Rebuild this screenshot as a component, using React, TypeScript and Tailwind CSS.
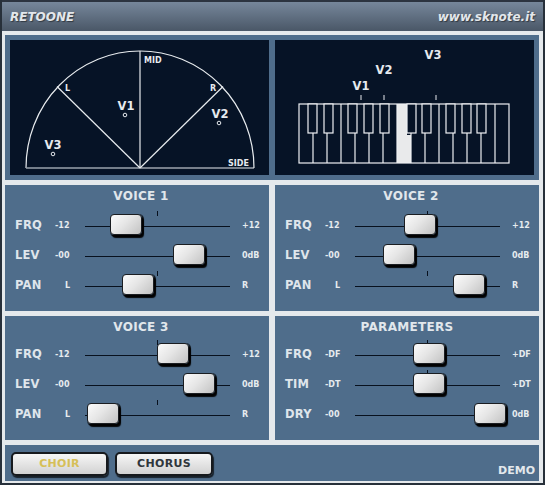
import React from 'react';

const FONT = { fontFamily: '"DejaVu Sans", Verdana, sans-serif' };

type RowProps = { label: string; min: string; max: string; pos: number; tick?: boolean };

function Row({ label, min, max, pos, tick }: RowProps) {
  return (
    <div className="flex items-center h-[30px]">
      <div className="w-[40px] flex-none text-[11.5px] font-bold text-[#dfe5eb] tracking-[0.2px]">{label}</div>
      <div className={min === 'L' ? 'w-[30px] flex-none pl-[10px] text-[8px] font-bold text-[#e6ebef]' : 'w-[30px] flex-none text-[8px] font-bold text-[#e6ebef]'}>{min}</div>
      <div className="relative flex-none w-[145px] h-[30px]">
        <div className="absolute left-0 right-0 top-[15px] h-px bg-[#08111e]" />
        {tick && <div className="absolute left-[72px] top-[0px] w-px h-[5px] bg-[#08111e]" />}
        <div
          className="absolute top-[3px] w-[32px] h-[21px] rounded-[4px] border border-[#1a1d21] bg-[linear-gradient(135deg,#fbfbfb_0%,#e6e6e6_45%,#c2c2c2_100%)] shadow-[2px_3px_1px_0px_rgba(0,0,0,0.95),1px_1px_0px_1px_rgba(0,0,0,0.7)]"
          style={{ left: pos }}
        />
      </div>
      <div className="ml-[12px] text-[8px] font-bold text-[#e6ebef]">{max}</div>
    </div>
  );
}

type PanelProps = {
  title: string;
  titleShift?: boolean;
  lower?: boolean;
  rows: RowProps[];
};

function Panel({ title, titleShift, lower, rows }: PanelProps) {
  return (
    <div className={lower ? 'w-[264px] h-[124px] bg-[#4f6d8b] pl-[10px] flex flex-col' : 'w-[264px] h-[126px] bg-[#4f6d8b] pl-[10px] flex flex-col'}>
      <div className={lower ? 'h-[24px] flex-none' : 'h-[26px] flex-none'}>
        <div className={titleShift ? 'h-[22px] flex items-center justify-center pl-[0px] pr-[2px] text-[12px] font-bold text-[#e1e7ec] tracking-[0.3px]' : 'h-[22px] flex items-center justify-center pr-[10px] text-[12px] font-bold text-[#e1e7ec] tracking-[0.3px]'}>
          {title}
        </div>
      </div>
      {rows.map((r) => (
        <Row key={r.label} {...r} />
      ))}
    </div>
  );
}

function StereoScreen() {
  const ff = '"DejaVu Sans", Verdana, sans-serif';
  return (
    <div className="w-[259px] h-[135px] bg-[#061326]">
      <svg width="259" height="135" viewBox="0 0 259 135">
        <path d="M16 128 A114 117 0 0 1 244 128" fill="none" stroke="#e8ecef" strokeWidth="1.2" />
        <line x1="16" y1="128" x2="130" y2="128" stroke="#9aa3ad" strokeWidth="1.6" />
        <line x1="130" y1="128" x2="244" y2="128" stroke="#e8ecef" strokeWidth="1.2" />
        <line x1="130" y1="11" x2="130" y2="128" stroke="#e8ecef" strokeWidth="1.2" />
        <line x1="130" y1="128" x2="47" y2="46.5" stroke="#e8ecef" strokeWidth="1.2" />
        <line x1="130" y1="128" x2="213" y2="46.5" stroke="#e8ecef" strokeWidth="1.2" />
        <g fontFamily={ff} fontWeight="bold" fill="#e6eaee">
          <text x="134" y="23" fontSize="8">MID</text>
          <text x="55" y="51" fontSize="8">L</text>
          <text x="200" y="51" fontSize="8">R</text>
          <text x="218" y="126" fontSize="8">SIDE</text>
          <text x="116" y="70" fontSize="11.5" textAnchor="middle">V1</text>
          <text x="210" y="78" fontSize="11.5" textAnchor="middle">V2</text>
          <text x="43" y="109" fontSize="11.5" textAnchor="middle">V3</text>
        </g>
        <circle cx="115" cy="75" r="1.8" fill="none" stroke="#e6eaee" strokeWidth="1" />
        <circle cx="209" cy="83" r="1.8" fill="none" stroke="#e6eaee" strokeWidth="1" />
        <circle cx="43" cy="114" r="1.8" fill="none" stroke="#e6eaee" strokeWidth="1" />
      </svg>
    </div>
  );
}

function KeyboardScreen() {
  const ff = '"DejaVu Sans", Verdana, sans-serif';
  const whites = Array.from({ length: 14 }, (_, i) => 24 + 14 * (i + 1));
  const blacks = [33, 49, 73, 89, 105, 132, 147, 171, 187, 202];
  return (
    <div className="w-[259px] h-[135px] bg-[#061326]">
      <svg width="259" height="135" viewBox="0 0 259 135">
        <polygon points="122,64 132,64 132,95 136,95 136,123 122,123" fill="#e9eaeb" />
        <rect x="24" y="64" width="210" height="59" fill="none" stroke="#eef1f3" strokeWidth="1.2" />
        {whites.map((x) => (
          <line key={x} x1={x} y1="64" x2={x} y2="123" stroke="#eef1f3" strokeWidth="1.2" />
        ))}
        {blacks.map((x) => (
          <rect key={x} x={x} y="64" width="9" height="29" fill="#061326" stroke="#eef1f3" strokeWidth="1.2" />
        ))}
        <line x1="86" y1="55" x2="86" y2="60" stroke="#e6eaee" strokeWidth="1" />
        <line x1="109" y1="55" x2="109" y2="60" stroke="#e6eaee" strokeWidth="1" />
        <line x1="161" y1="55" x2="161" y2="60" stroke="#e6eaee" strokeWidth="1" />
        <g fontFamily={ff} fontWeight="bold" fill="#e6eaee" fontSize="11.5" textAnchor="middle">
          <text x="86" y="50">V1</text>
          <text x="109" y="34">V2</text>
          <text x="158" y="19">V3</text>
        </g>
      </svg>
    </div>
  );
}

export default function App() {
  return (
    <div className="w-[545px] h-[485px] bg-[#e5e9ec] border-x-2 border-b-2 border-[#27303a] flex flex-col" style={FONT}>
      <div className="h-[31px] flex-none flex items-center justify-between px-[8px] border-t-2 border-[#2c3440] bg-[linear-gradient(to_bottom,#76879b,#4a5767)]">
        <span className="text-[12px] font-bold italic text-[#e3e7eb] [text-shadow:1px_1px_1px_rgba(0,0,0,0.45)]">RETOONE</span>
        <span className="text-[12px] font-bold italic text-[#e3e7eb] [text-shadow:1px_1px_1px_rgba(0,0,0,0.45)]">www.sknote.it</span>
      </div>
      <div className="flex flex-col pl-[3px] pr-[4px] pt-[4px] gap-[5px]">
        <div className="h-[145px] bg-[#4f6d8b] p-[5px] flex gap-[6px]">
          <StereoScreen />
          <KeyboardScreen />
        </div>
        <div className="flex gap-[6px]">
          <Panel
            title="VOICE 1"
            titleShift
            rows={[
              { label: 'FRQ', min: '-12', max: '+12', pos: 25, tick: true },
              { label: 'LEV', min: '-00', max: '0dB', pos: 88 },
              { label: 'PAN', min: 'L', max: 'R', pos: 37, tick: true },
            ]}
          />
          <Panel
            title="VOICE 2"
            titleShift
            rows={[
              { label: 'FRQ', min: '-12', max: '+12', pos: 49, tick: true },
              { label: 'LEV', min: '-00', max: '0dB', pos: 28 },
              { label: 'PAN', min: 'L', max: 'R', pos: 98, tick: true },
            ]}
          />
        </div>
        <div className="flex gap-[6px]">
          <Panel
            title="VOICE 3"
            titleShift
            lower
            rows={[
              { label: 'FRQ', min: '-12', max: '+12', pos: 72, tick: true },
              { label: 'LEV', min: '-00', max: '0dB', pos: 98 },
              { label: 'PAN', min: 'L', max: 'R', pos: 2, tick: true },
            ]}
          />
          <Panel
            title="PARAMETERS"
            lower
            rows={[
              { label: 'FRQ', min: '-DF', max: '+DF', pos: 58, tick: true },
              { label: 'TIM', min: '-DT', max: '+DT', pos: 58, tick: true },
              { label: 'DRY', min: '-00', max: '0dB', pos: 119 },
            ]}
          />
        </div>
        <div className="h-[36px] bg-[#4f6d8b] flex pl-[6px] pr-[4px] pt-[7px] gap-[7px]">
          <div className="w-[97px] h-[24px] rounded-[5px] border-2 border-[#16191d] bg-[linear-gradient(to_bottom,#f6f6f6,#d2d2d2)] shadow-[1px_2px_1px_rgba(0,0,0,0.7)] flex items-center justify-center text-[11px] font-bold text-[#d6bf57] tracking-[0.3px]">
            CHOIR
          </div>
          <div className="w-[98px] h-[24px] rounded-[5px] border-2 border-[#16191d] bg-[linear-gradient(to_bottom,#f6f6f6,#d2d2d2)] shadow-[1px_2px_1px_rgba(0,0,0,0.7)] flex items-center justify-center text-[11px] font-bold text-[#30363c] tracking-[0.3px]">
            CHORUS
          </div>
          <div className="ml-auto self-end pb-[2px] text-[11px] font-bold text-[#e3e8ec]">DEMO</div>
        </div>
      </div>
    </div>
  );
}
